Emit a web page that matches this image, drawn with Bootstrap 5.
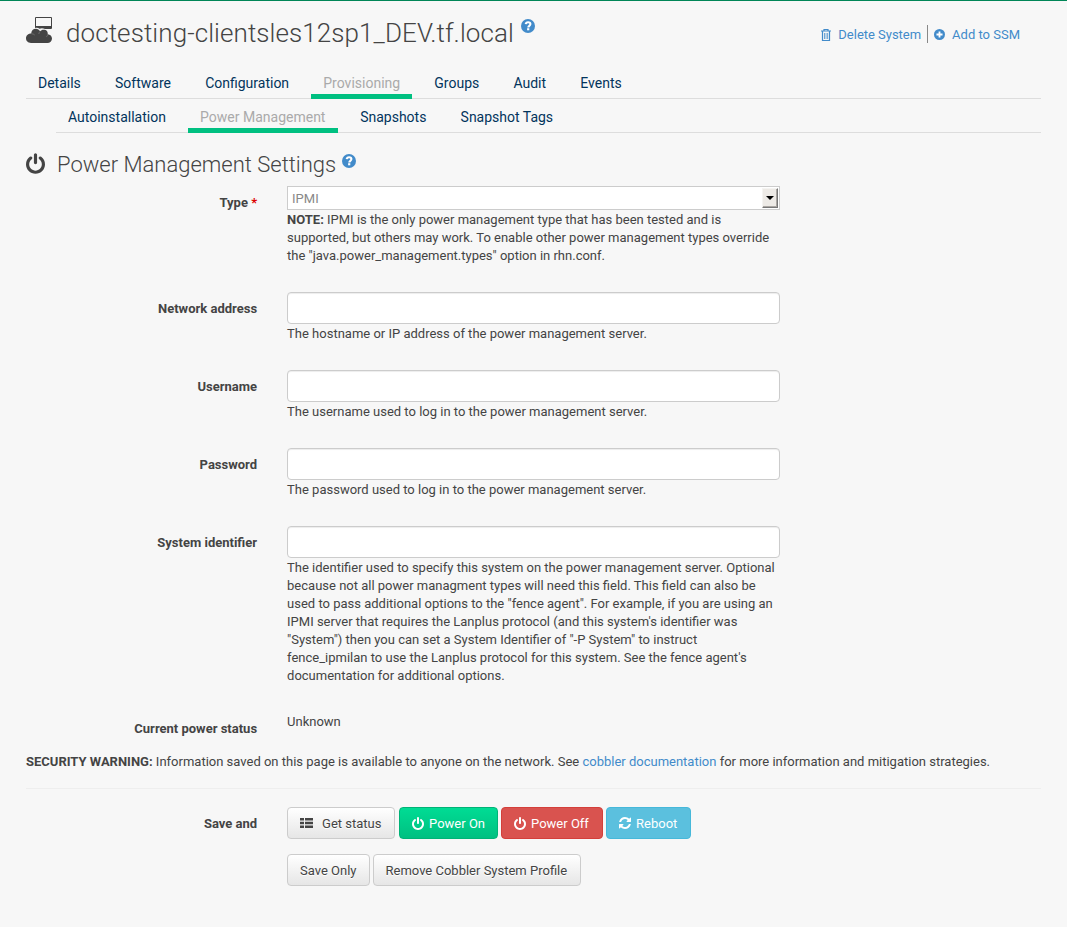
<!DOCTYPE html>
<html lang="en">
<head>
<meta charset="utf-8">
<title>Power Management Settings</title>
<meta name="viewport" content="width=device-width, initial-scale=1">
<link href="https://cdn.jsdelivr.net/npm/bootstrap@5.3.0/dist/css/bootstrap.min.css" rel="stylesheet">
<style>
body{font:13px/18px Roboto,sans-serif;color:#444;background:#f7f7f7;border-top:1px solid #008657;min-height:927px}
a{color:#428bca;text-decoration:none}
svg{display:block;fill:currentColor;flex:none}
b,label{font-weight:700}
.page{padding:0 26px}
.head{height:70px}
.head h1{font-size:26px;line-height:36px;font-weight:300;margin:14px 0 0 14px;letter-spacing:.08px}
.head .sys{margin-top:16px}
.head .hlp{margin:18px 0 0 7px;color:#428bca}
.tools{margin:24px 21px 0 auto;height:18px}
.tools a{display:flex;align-items:center;padding-top:1px}
.tools .sep{width:1px;height:18px;background:#888;margin:0 6px 0 6px}
.tools .del{letter-spacing:-.02px}
.tabs{border-bottom:1px solid #ddd;font-size:14px;line-height:20px;flex-wrap:nowrap;gap:10.2px}
.tabs .nav-link{padding:2px 12px 1px;height:23px;color:#02345c;border-bottom:0;white-space:nowrap}
.tabs .nav-link.active{color:#aaa;box-shadow:inset 0 -5px #00c081;height:28px;margin-bottom:-1px}
.tabs-main{height:28px}
.tabs-sub{height:34px;margin-left:30px;padding-top:6px}
.tabs-sub .nav-link.active{height:28px;padding-right:12.5px}
h2{font-size:22px;line-height:30px;font-weight:300;margin:1px 0 0 11px}
.sect{height:53px;padding-top:16px}
.frm{--bs-gutter-x:30px;margin-left:-15.25px}
.frm .lab{text-align:right;padding-top:8px}
.frm.grp{margin-bottom:27px}
.field{height:32px;border:1px solid #ccc;border-radius:4px;box-shadow:inset 0 1px 1px rgba(0,0,0,.075);background:#fff;padding:6px 12px;font-size:13px;margin-bottom:1px}
.picker{height:24px;border:1px solid #ccc;background:#fff;color:#888;padding:0 1px 0 4px;margin-bottom:1px}
.picker span{padding-top:2px}
.picker i{width:16px;height:20px;background:#edeae6;border:1px solid;border-color:#f5f4f2 #777 #777 #f5f4f2;box-shadow:inset -1px -1px #aaa6a2;display:flex;align-items:center;justify-content:center;color:#000}
.req{color:#d00}
.rule{height:1px;background:#eee;margin:17px 0 18px}
.btn{--bs-btn-font-size:13px;--bs-btn-line-height:18px;--bs-btn-padding-x:12px;height:32px;padding-top:7px;padding-bottom:5px;border-radius:4px;display:inline-flex;align-items:center;white-space:nowrap;margin-right:3px}
.btn svg{margin:-2px 6px 0 0}
.b-def{color:#444;border-color:#ccc;background:linear-gradient(#fff,#e6e6e6);text-shadow:0 1px 0 #fff}
.b-on{color:#fff;border-color:#00b377;background:linear-gradient(#00dc94,#00c081)}
.b-off{color:#fff;border-color:#d43f3a;background:#d9534f}
.b-re{color:#fff;border-color:#46b8da;background:#5bc0de}
.w-get{width:108px}.w-on{width:99px}.w-off{width:102px}.w-re{width:85px}.w-rm{width:208px}
.btn.w-get svg{margin-right:9px}
.btn.w-on,.btn.w-off,.btn.w-re{padding-right:0}
.btn.w-on svg,.btn.w-off svg,.btn.w-re svg{margin-right:5px}
</style>
</head>
<body>
<svg width="0" height="0" class="position-absolute">
<symbol id="power" viewBox="128 0 1536 1664"><path d="M1664 896q0 156-61 298t-164 245-245 164-298 61-298-61-245-164-164-245-61-298q0-182 80.5-343t226.5-270q43-32 95.5-25t83.5 50q32 42 24.5 94.5t-49.5 84.5q-98 74-151.500 181t-53.500 228q0 104 40.500 198.500t109.500 163.500 163.500 109.500 198.500 40.500 198.500-40.500 163.500-109.500 109.500-163.500 40.500-198.500q0-121-53.500-228t-151.500-181q-42-32-49.500-84.500t24.500-94.500q31-43 84-50t95 25q146 109 226.500 270t80.500 343zm-640-768v640q0 52-38 90t-90 38-90-38-38-90v-640q0-52 38-90t90-38 90 38 38 90z"/></symbol>
<symbol id="help" viewBox="0 0 14 14"><circle cx="7" cy="7" r="7"/><path d="M4.700 5.200C4.900 3.700 6 3.200 7.100 3.200c1.300 0 2.300.8 2.300 1.900 0 1.700-2.100 1.700-2.100 3.300" fill="none" stroke="#fff" stroke-width="2.100"/><path d="M6.100 9.200h2.200v2.100H6.100z" fill="#fff"/></symbol>
<symbol id="reload" viewBox="128 128 1536 1536"><path d="M1639 1056q0 5-1 7-64 268-268 434.500t-478 166.500q-146 0-282.500-55t-243.500-157l-129 129q-19 19-45 19t-45-19-19-45v-448q0-26 19-45t45-19h448q26 0 45 19t19 45-19 45l-137 137q71 66 161 102t187 36q134 0 250-65t186-179q11-17 53-117 8-23 30-23h192q13 0 22.500 9.500t9.500 22.500zm25-800v448q0 26-19 45t-45 19h-448q-26 0-45-19t-19-45 19-45l138-138q-148-137-349-137-134 0-250 65t-186 179q-11 17-53 117-8 23-30 23h-199q-13 0-22.500-9.500t-9.500-22.500v-7q65-268 270-434.500t480-166.500q146 0 284 55.500t245 156.500l130-129q19-19 45-19t45 19 19 45z"/></symbol>
</svg>
<main class="page">
<header class="head d-flex">
  <svg class="sys" width="26" height="27" viewBox="0 0 26 27"><path fill-rule="evenodd" d="M10 0h15q1 0 1 1v10q0 1-1 1h-6q-3-1.500-5.500-.2Q12 10.500 9 11V1q0-1 1-1zm0 1v8h15V1z"/><path d="M5.200 16.500c.2-3 2-4.800 4.600-4.800 2 0 3.400 1 4.200 2.600 1.200-1.400 3-2 4.800-1.500 2 .5 3.200 2.300 3 4.400 2.400.2 4.200 2 4.200 4.300 0 2.600-2 4.500-4.600 4.500H5c-2.900 0-5-2-5-4.700s2.200-4.900 5.200-4.800z"/><path d="M5.400 16.700q2 .1 3.300 1.300M14 14.500q-1 1-1.200 2.500M21.800 17.300q-.2 1.400-1.400 2.600" fill="none" stroke="#888" stroke-width=".6"/></svg>
  <h1>doctesting-clientsles12sp1_DEV.tf.local</h1>
  <svg class="hlp" width="14" height="14"><use href="#help"/></svg>
  <div class="tools d-flex">
    <a class="del" href="#"><svg width="10" height="12" viewBox="0 0 10 12" style="margin-right:7px"><path d="M0 2h10M3 1.500V.5h4v1M1.500 2v9.500h7V2" fill="none" stroke="currentColor" stroke-width="1.200"/><path d="M3 4h1v6H3zM4.600 4h.9v6h-.9zM6.100 4h1v6h-1z" opacity=".75"/></svg>Delete System</a>
    <span class="sep"></span>
    <a href="#"><svg width="11" height="11" viewBox="0 0 12 12" style="margin-right:7px"><circle cx="6" cy="6" r="6"/><path d="M6 2.700v6.600M2.700 6h6.600" stroke="#fff" stroke-width="2"/></svg>Add to SSM</a>
  </div>
</header>
<nav class="nav tabs tabs-main">
  <a class="nav-link" href="#">Details</a><a class="nav-link" href="#">Software</a><a class="nav-link" href="#">Configuration</a><a class="nav-link active" href="#">Provisioning</a><a class="nav-link" href="#">Groups</a><a class="nav-link" href="#">Audit</a><a class="nav-link" href="#">Events</a>
</nav>
<nav class="nav tabs tabs-sub">
  <a class="nav-link" href="#">Autoinstallation</a><a class="nav-link active" href="#">Power Management</a><a class="nav-link" href="#">Snapshots</a><a class="nav-link" href="#">Snapshot Tags</a>
</nav>
<div class="sect d-flex">
  <svg class="mt-1" width="19" height="21"><use href="#power"/></svg>
  <h2 style="margin-left:12px">Power Management Settings</h2>
  <svg width="14" height="14" style="color:#428bca;margin:5px 0 0 6px"><use href="#help"/></svg>
</div>
<form>
  <div class="row frm grp">
    <label class="col-3 lab">Type <span class="req">*</span></label>
    <div class="col-6"><div class="picker d-flex align-items-center justify-content-between"><span>IPMI</span><i><svg width="8" height="4"><path d="M0 0h8L4 4z"/></svg></i></div>
    <b>NOTE:</b> IPMI is the only power management type that has been tested and is<br>supported, but others may work. To enable other power management types override<br>the "java.power_management.types" option in rhn.conf.</div>
  </div>
  <div class="row frm grp">
    <label class="col-3 lab" for="addr">Network address</label>
    <div class="col-6"><input id="addr" class="form-control field">The hostname or IP address of the power management server.</div>
  </div>
  <div class="row frm grp">
    <label class="col-3 lab" for="user">Username</label>
    <div class="col-6"><input id="user" class="form-control field">The username used to log in to the power management server.</div>
  </div>
  <div class="row frm grp">
    <label class="col-3 lab" for="pass">Password</label>
    <div class="col-6"><input id="pass" type="password" class="form-control field">The password used to log in to the power management server.</div>
  </div>
  <div class="row frm grp">
    <label class="col-3 lab" for="ident">System identifier</label>
    <div class="col-6 text-nowrap"><input id="ident" class="form-control field">The identifier used to specify this system on the power management server. Optional<br>because not all power managment types will need this field. This field can also be<br>used to pass additional options to the "fence agent". For example, if you are using an<br>IPMI server that requires the Lanplus protocol (and this system's identifier was<br>"System") then you can set a System Identifier of "-P System" to instruct<br>fence_ipmilan to use the Lanplus protocol for this system. See the fence agent's<br>documentation for additional options.</div>
  </div>
  <div class="row frm">
    <label class="col-3 lab">Current power status</label>
    <div class="col-6" style="padding-top:1px">Unknown</div>
  </div>
  <div style="margin-top:15px"><b>SECURITY WARNING:</b> Information saved on this page is available to anyone on the network. See <a href="#">cobbler documentation</a> for more information and mitigation strategies.</div>
  <div class="rule"></div>
  <div class="row frm">
    <label class="col-3 lab">Save and</label>
    <div class="col-6">
      <div class="d-flex mb-3"><button type="button" class="btn b-def w-get" style="margin-right:4px"><svg width="13" height="10" viewBox="0 0 13 10"><path d="M0 0h4v2.600H0zM5 0h8v2.600H5zM0 3.700h4v2.600H0zM5 3.700h8v2.600H5zM0 7.400h4V10H0zM5 7.400h8V10H5z"/></svg>Get status</button><button type="button" class="btn b-on w-on"><svg width="12" height="13"><use href="#power"/></svg>Power On</button><button type="button" class="btn b-off w-off"><svg width="12" height="13"><use href="#power"/></svg>Power Off</button><button type="button" class="btn b-re w-re"><svg width="12" height="12"><use href="#reload"/></svg>Reboot</button></div>
      <div class="d-flex" style="margin-top:-1px"><button type="button" class="btn b-def">Save Only</button><button type="button" class="btn b-def w-rm">Remove Cobbler System Profile</button></div>
    </div>
  </div>
</form>
</main>
<script src="https://cdn.jsdelivr.net/npm/bootstrap@5.3.0/dist/js/bootstrap.bundle.min.js"></script>
</body>
</html>
